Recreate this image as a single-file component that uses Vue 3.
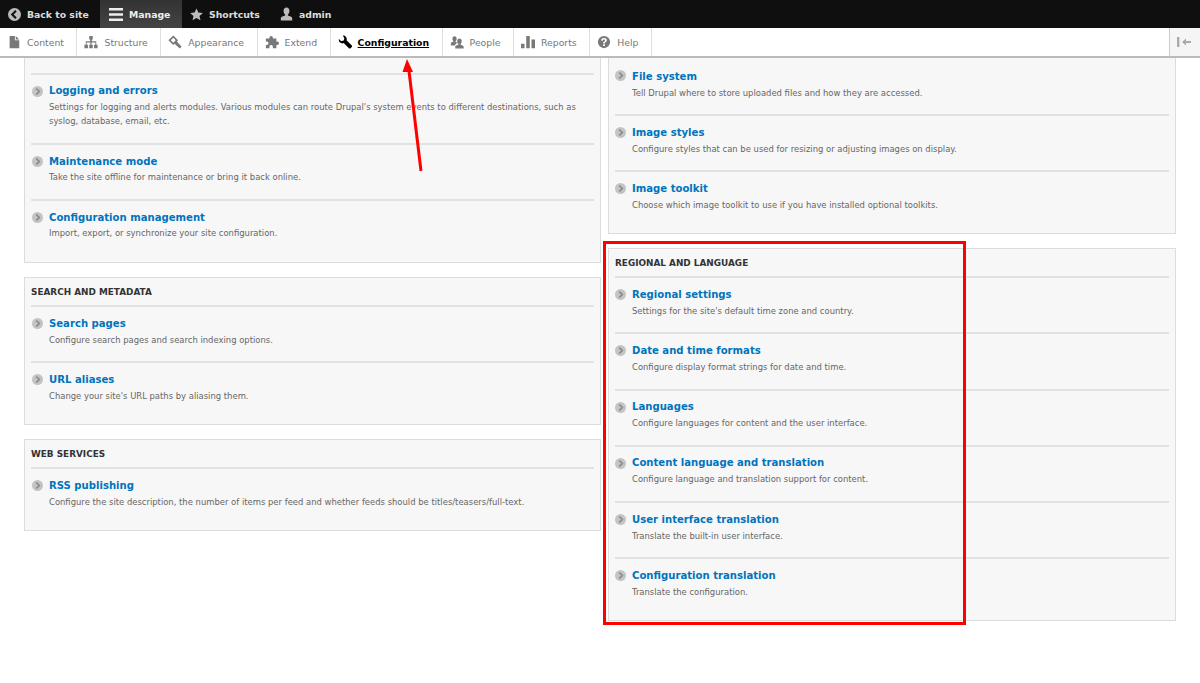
<script setup>
const groupsLeft = [
  {
    title: '',
    clipped: true,
    items: [
      { name: 'Logging and errors', desc: "Settings for logging and alerts modules. Various modules can route Drupal's system events to different destinations, such as syslog, database, email, etc." },
      { name: 'Maintenance mode', desc: 'Take the site offline for maintenance or bring it back online.' },
      { name: 'Configuration management', desc: 'Import, export, or synchronize your site configuration.' }
    ]
  },
  {
    title: 'Search and metadata',
    items: [
      { name: 'Search pages', desc: 'Configure search pages and search indexing options.' },
      { name: 'URL aliases', desc: "Change your site's URL paths by aliasing them." }
    ]
  },
  {
    title: 'Web services',
    items: [
      { name: 'RSS publishing', desc: 'Configure the site description, the number of items per feed and whether feeds should be titles/teasers/full-text.' }
    ]
  }
]

const groupsRight = [
  {
    title: '',
    clipped: true,
    noLine: true,
    items: [
      { name: 'File system', desc: 'Tell Drupal where to store uploaded files and how they are accessed.' },
      { name: 'Image styles', desc: 'Configure styles that can be used for resizing or adjusting images on display.' },
      { name: 'Image toolkit', desc: 'Choose which image toolkit to use if you have installed optional toolkits.' }
    ]
  },
  {
    title: 'Regional and language',
    items: [
      { name: 'Regional settings', desc: "Settings for the site's default time zone and country." },
      { name: 'Date and time formats', desc: 'Configure display format strings for date and time.' },
      { name: 'Languages', desc: 'Configure languages for content and the user interface.' },
      { name: 'Content language and translation', desc: 'Configure language and translation support for content.' },
      { name: 'User interface translation', desc: 'Translate the built-in user interface.' },
      { name: 'Configuration translation', desc: 'Translate the configuration.' }
    ]
  }
]

const columns = [groupsLeft, groupsRight]

const tray = [
  { label: 'Content', icon: 'content' },
  { label: 'Structure', icon: 'structure' },
  { label: 'Appearance', icon: 'appearance' },
  { label: 'Extend', icon: 'extend' },
  { label: 'Configuration', icon: 'config', active: true },
  { label: 'People', icon: 'people' },
  { label: 'Reports', icon: 'reports' },
  { label: 'Help', icon: 'help' }
]
</script>

<template>
  <div class="page">
    <header class="toolbar">
      <nav class="bar">
        <a class="bar-item back">
          <svg width="13" height="13" viewBox="0 0 16 16"><circle cx="8" cy="8" r="8" fill="#bbb"/><path d="M9.800 3.400 5.200 8l4.600 4.600" fill="none" stroke="#111" stroke-width="2.600"/></svg>
          Back to site
        </a>
        <a class="bar-item manage">
          <svg width="14" height="13" viewBox="0 0 14 13"><path d="M0 0h14v2.600H0zM0 5.200h14v2.600H0zM0 10.400h14V13H0z" fill="#eee"/></svg>
          Manage
        </a>
        <a class="bar-item shortcuts">
          <svg width="13" height="13" viewBox="0 0 16 16"><path d="M8 .5l2.300 5 5.500.6-4.100 3.700 1.200 5.400L8 12.400l-4.900 2.800 1.200-5.400L.2 6.100l5.500-.6z" fill="#bbb"/></svg>
          Shortcuts
        </a>
        <a class="bar-item user">
          <svg width="13" height="14" viewBox="0 0 16 16"><path d="M8 0c2.300 0 3.600 1.800 3.600 4.200 0 1.800-.8 3.500-1.900 4.400v1.300c2 .6 5 1.400 5.300 3.100V16H1v-3c.3-1.700 3.300-2.500 5.300-3.100V8.600C5.200 7.700 4.400 6 4.400 4.200 4.400 1.800 5.700 0 8 0z" fill="#bbb"/></svg>
          admin
        </a>
      </nav>
      <nav class="tray">
        <a v-for="t in tray" :key="t.label" class="tray-item" :class="{ active: t.active }">
          <svg class="tray-icon" width="14" height="14" viewBox="0 0 16 16" :fill="t.active ? '#000' : '#787878'">
            <path v-if="t.icon === 'content'" d="M3 1h6v5h5v9H3zM10 1l4 4h-4z"/>
            <path v-else-if="t.icon === 'structure'" d="M6 1h4v4H9v2h5v4h1.500v4h-4v-4H13V8.500H8.700V11H10v4H6v-4h1.300V8.500H3V11h1.500v4h-4v-4H2V7h5V5H6z"/>
            <path v-else-if="t.icon === 'appearance'" fill-rule="evenodd" d="M.5 6 6 .5 11.500 6l-1.300 1.300 5.300 6.100-2 2-6-5.400L6 11.500zM3.200 6 6 8.800 8.800 6 6 3.200z"/>
            <path v-else-if="t.icon === 'extend'" d="M1 4h4V3a2 2 0 0 1 4 0v1h4v3.500h1a2 2 0 0 1 0 4h-1V15H9v-1.500a2 2 0 0 0-4 0V15H1v-3.500h1a2 2 0 0 0 0-4H1z"/>
            <path v-else-if="t.icon === 'config'" d="M5.500.7a4 4 0 0 1 4.300 5.300l5.700 5.600a1.700 1.700 0 0 1-.1 2.500l-.7.700a1.700 1.700 0 0 1-2.500.1L6.500 9.200A4 4 0 0 1 1 4.700l2.700 2.500L6.500 6.400l.8-2.700z"/>
            <path v-else-if="t.icon === 'people'" d="M5.200 1.500c1.500 0 2.400 1.200 2.400 2.800 0 1.200-.5 2.300-1.200 2.900v.9c.7.200 1.500.5 2.100.9-1.300.5-2.200 1.200-2.500 2.200V12H1V9.500c.2-1.100 1.900-1.600 3-2V7.200c-.7-.6-1.200-1.700-1.200-2.900 0-1.600.9-2.800 2.400-2.800zM10.800 4c1.600 0 2.600 1.300 2.600 3 0 1.300-.6 2.400-1.300 3.100v.9c1.300.4 3.300 1 3.500 2.200V15.500H6v-2.300c.2-1.200 2.200-1.800 3.500-2.200v-.9C8.800 9.400 8.200 8.300 8.200 7c0-1.700 1-3 2.600-3z"/>
            <path v-else-if="t.icon === 'reports'" d="M0 10h4v5H0zM6 1h4v14H6zM12 5h4v10h-4z"/>
            <path v-else-if="t.icon === 'help'" fill-rule="evenodd" d="M8 1a7 7 0 1 1 0 14A7 7 0 0 1 8 1zM7 10.500v2h2v-2zM8 3.500c-1.800 0-3 1-3.200 2.700l1.900.3C6.800 5.600 7.200 5.200 8 5.200c.7 0 1.200.4 1.200 1 0 .5-.3.800-.9 1.200-.9.600-1.300 1.200-1.300 2.200v.2h1.900c0-.6.200-.9.900-1.400 1-.7 1.400-1.300 1.400-2.300 0-1.600-1.300-2.600-3.200-2.600z"/>
          </svg>
          <span>{{ t.label }}</span>
        </a>
        <span class="tray-fill"></span>
        <a class="tray-toggle">
          <svg width="16" height="12" viewBox="0 0 16 12"><path d="M0 1h2.400v10H0zM5 6l4-3.500V5h5v2H9v2.500z" fill="#aaa"/></svg>
        </a>
      </nav>
    </header>

    <main class="columns">
      <div v-for="(col, i) in columns" :key="i" class="column">
        <section
          v-for="group in col"
          :key="group.title + group.items[0].name"
          class="panel"
          :class="{ clipped: group.clipped, 'no-line': group.noLine }"
        >
          <h3 v-if="group.title" class="panel-title">{{ group.title }}</h3>
          <ul class="rows">
            <li v-for="item in group.items" :key="item.name" class="row">
              <svg class="arrow-icon" width="11" height="11" viewBox="0 0 16 16"><circle cx="8" cy="8" r="8" fill="#c4c4c4"/><path d="M6.200 3.600 10.600 8l-4.400 4.400" fill="none" stroke="#888" stroke-width="2.400"/></svg>
              <a class="row-title">{{ item.name }}</a>
              <p class="row-desc">{{ item.desc }}</p>
            </li>
          </ul>
        </section>
      </div>
    </main>

    <!-- annotations from the screenshot -->
    <div class="red-box"></div>
    <svg class="red-arrow" width="30" height="125" viewBox="0 0 30 125">
      <path d="M22 114 10 14" stroke="#f00" stroke-width="3" fill="none"/>
      <path d="M8 2 3.500 15h10.500z" fill="#f00"/>
    </svg>
  </div>
</template>

<style scoped>
.page {
  position: relative;
  height: 683px;
  overflow: hidden;
  background: #fff;
  font-family: "DejaVu Sans", sans-serif;
  font-size: 9.3px;
  color: #666;
}

.toolbar {
  position: relative;
  z-index: 2;
  height: 58px;
}

.bar {
  display: flex;
  height: 28px;
  background: #0f0f0f;
  color: #ddd;
  font-weight: 700;
}

.bar-item {
  display: flex;
  align-items: center;
  gap: 6px;
  height: 28px;
  padding: 0 8px;
  box-sizing: border-box;
  white-space: nowrap;
}

.back {
  width: 100px;
}

.manage {
  width: 82px;
  padding: 0 9px;
  background: linear-gradient(#333, #444);
  color: #eee;
}

.shortcuts {
  width: 90px;
}

.tray {
  display: flex;
  height: 28px;
  background: #fff;
  border-bottom: 2px solid #bbb;
}

.tray-item {
  display: flex;
  align-items: center;
  gap: 6px;
  padding: 0 12.5px 0 7px;
  border-right: 1px solid #e0e0e0;
  color: #777;
  white-space: nowrap;
}

.tray-item.active {
  color: #000;
  font-weight: 700;
  text-decoration: underline;
}

.tray-icon {
  flex: none;
}

.tray-fill {
  flex: 1;
}

.tray-toggle {
  display: flex;
  align-items: center;
  justify-content: center;
  width: 31px;
  background: #f5f5f5;
  border-left: 1px solid #ccc;
  box-sizing: border-box;
}

.columns {
  display: grid;
  grid-template-columns: 577px 568px;
  gap: 7px;
  padding: 0 24px;
  margin-top: -2px;
}

.column {
  display: flex;
  flex-direction: column;
  gap: 14px;
}

.panel {
  background: #f7f7f7;
  border: 1px solid #dcdcdc;
  padding: 0 6px 7px;
}

.column:last-child .panel:not(.clipped) {
  padding-bottom: 6px;
}

.panel.clipped {
  border-top: 0;
  padding-top: 16.5px;
  padding-bottom: 6.5px;
}

.panel.no-line {
  padding-top: 1px;
  padding-bottom: 7px;
}

.panel-title {
  margin: 0;
  height: 27px;
  line-height: 29px;
  font-size: 8.9px;
  font-weight: 700;
  color: #333;
  text-transform: uppercase;
}

.rows {
  list-style: none;
  margin: 0;
  padding: 0;
}

.row {
  position: relative;
  box-sizing: border-box;
  border-top: 2px solid #e2e2e2;
  padding: 9.5px 0 14.25px 18px;
}

.column:first-child .panel:not(.clipped) .row {
  padding-top: 10.5px;
  padding-bottom: 13px;
}

.column:first-child .clipped .row {
  padding-bottom: 14.5px;
}

.column:first-child .clipped .row-desc {
  margin-top: 1.5px;
}

.column:last-child .row {
  padding-left: 17px;
}

.no-line .row {
  padding-bottom: 14px;
}

.no-line .row:first-child {
  border-top-color: transparent;
  padding-top: 10.5px;
}

.arrow-icon {
  position: absolute;
  left: 1px;
  top: 11px;
}

.column:last-child .arrow-icon {
  left: 0;
}

.row-title {
  display: block;
  font-size: 10.1px;
  font-weight: 700;
  line-height: 14px;
  color: #0074bd;
}

.row-desc {
  margin: 2px 0 0;
  font-size: 8.43px;
  line-height: 14.5px;
}

.red-box {
  position: absolute;
  left: 603px;
  top: 241px;
  width: 363px;
  height: 384px;
  box-sizing: border-box;
  border: 3px solid #f00;
}

.red-arrow {
  position: absolute;
  left: 399px;
  top: 57px;
}
</style>
